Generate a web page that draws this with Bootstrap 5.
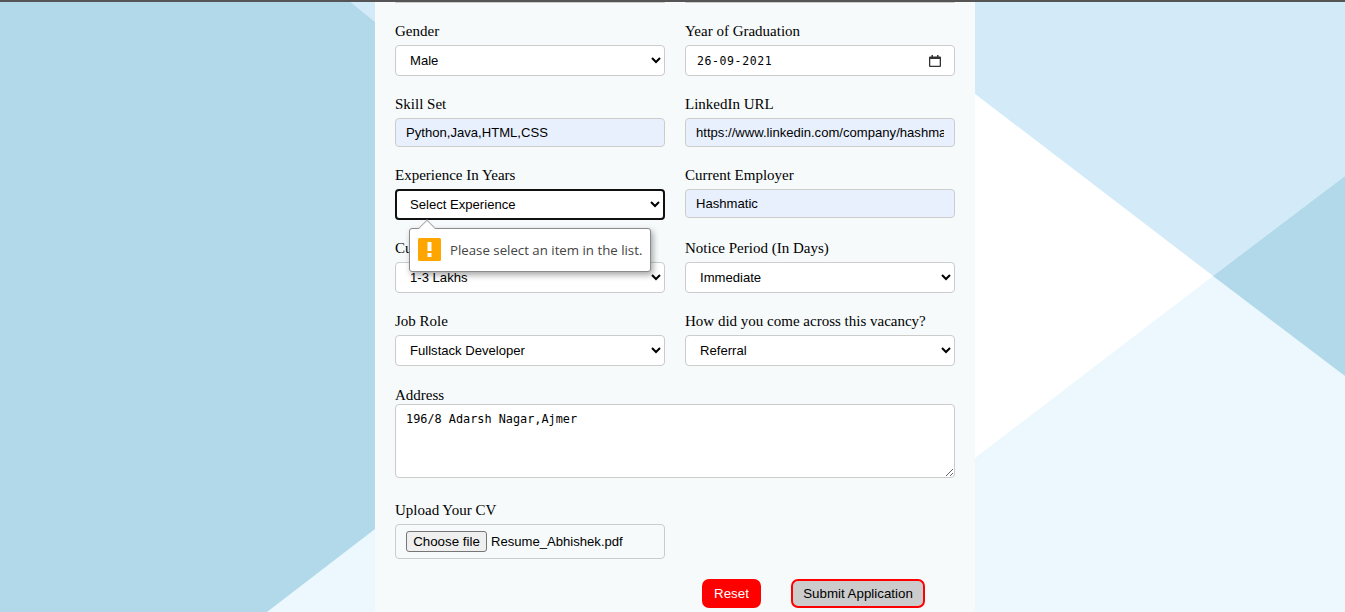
<!DOCTYPE html>
<html lang="en">
<head>
  <meta charset="UTF-8">
  <meta name="viewport" content="width=device-width, initial-scale=1.0">
  <title>Job Application</title>
  <link href="https://cdn.jsdelivr.net/npm/bootstrap@5.3.0/dist/css/bootstrap.min.css" rel="stylesheet">
  <style>
    html, body {
      height: 100%;
      overflow: hidden;
    }
    body {
      background-color: #ecf8fe;
      background-image: url("data:image/svg+xml,%3Csvg xmlns='http://www.w3.org/2000/svg' width='1345' height='612'%3E%3Cpolygon fill='%23d3ebf9' points='348,0 1345,0 1345,176 1213,276 975,94 375,22'/%3E%3Cpolygon fill='%23fff' points='975,94 1213,276 975,458'/%3E%3Cpolygon fill='%23b1d9ea' points='1345,176 1213,276 1345,376'/%3E%3Cpolygon fill='%23b1d9ea' points='0,0 348,0 375,22 375,529 267,612 0,612'/%3E%3C/svg%3E");
      background-repeat: no-repeat;
      border-top: 2px solid #555;
      font-family: "Liberation Serif", serif;
      color: #000;
    }
    .apply-panel {
      width: 600px;
      height: 610px;
      margin-left: 375px;
      padding: 0 20px;
      background: #f6fafb;
    }
    .apply-panel .row {
      --bs-gutter-x: 20px;
      margin-bottom: 16px;
    }
    .cut-field {
      height: 1px;
      border-bottom: 1px solid #ccc;
      border-radius: 0 0 4px 4px;
    }
    .fld-label {
      display: block;
      font-size: 15px;
      line-height: 24px;
      margin-bottom: 2px;
    }
    .fld-label.tight {
      line-height: 18px;
      margin: 20px 0 0;
    }
    .fld {
      font-family: "Liberation Sans", Arial, sans-serif;
      font-size: 13.1px;
      line-height: 17px;
      color: #000;
      border: 1px solid #ccc;
      border-radius: 4px;
      padding: 5px 10px;
      height: 29px;
    }
    select.fld {
      appearance: auto;
      -webkit-appearance: auto;
      height: 31px;
      background-color: #fff;
    }
    .fld.filled {
      background-color: #e8f0fe;
    }
    .fld.date-fld {
      height: 31px;
      padding-left: 11px;
      font-family: "DejaVu Sans Mono", monospace;
      font-size: 11.5px;
      letter-spacing: .6px;
      background: #fff url("data:image/svg+xml,%3Csvg xmlns='http://www.w3.org/2000/svg' width='12' height='12'%3E%3Cpath fill='%23333' d='M1 1.5h1.5V0h1.5v1.5h4V0h1.5v1.5H11a1 1 0 0 1 1 1V11a1 1 0 0 1-1 1H1a1 1 0 0 1-1-1V2.5a1 1 0 0 1 1-1zM1.300 4v6.700h9.400V4z'/%3E%3C/svg%3E") no-repeat right 13px center;
    }
    .fld.is-focus {
      border: 2px solid #101010;
      padding: 4px 9px;
      box-shadow: none;
    }
    textarea.fld {
      height: 74px;
      font-family: "DejaVu Sans Mono", monospace;
      font-size: 11.85px;
      line-height: 15px;
      padding: 7px 10px;
    }
    .file-fld {
      height: 35px;
      padding: 0 10px;
      background: transparent;
    }
    .file-btn {
      height: 21px;
      width: 81px;
      padding: 0;
      background: #efefef;
      border: 1px solid #767676;
      border-radius: 3px;
      font-family: "Liberation Sans", Arial, sans-serif;
      font-size: 13.33px;
      line-height: 19px;
      color: #000;
    }
    .act-row {
      padding-right: 30px;
      gap: 30px;
      margin-top: 20px;
    }
    .act-btn {
      height: 29px;
      padding: 0;
      font-family: "Liberation Sans", Arial, sans-serif;
      font-size: 13.33px;
      line-height: 25px;
      border-radius: 7px;
    }
    .act-reset {
      width: 59px;
      background: #f00;
      border: 2px solid #f00;
      color: #fff;
    }
    .act-submit {
      width: 134px;
      background: #ccc;
      border: 2px solid #f00;
      color: #000;
    }
    .tip-bubble {
      position: absolute;
      left: 24px;
      top: 65px;
      width: 242px;
      height: 44px;
      background: #fff;
      border: 1px solid #8a8a8a;
      border-radius: 3px;
      box-shadow: 2px 3px 6px rgba(0, 0, 0, .35);
      padding-left: 8px;
      gap: 9px;
      font-family: "Open Sans", sans-serif;
      font-size: 13.25px;
      white-space: nowrap;
      color: #444;
      z-index: 5;
    }
    .tip-bubble span {
      padding-top: 2px;
    }
    .tip-bubble::before {
      content: "";
      position: absolute;
      left: 11px;
      top: -7px;
      width: 12px;
      height: 12px;
      background: #fff;
      border-left: 1px solid #aaa;
      border-top: 1px solid #aaa;
      transform: rotate(45deg);
    }
    .tip-icon {
      width: 23px;
      height: 23px;
      flex: none;
      margin-top: -2px;
    }
  </style>
</head>
<body>
  <div class="apply-panel">
    <div class="row">
      <div class="col-6"><div class="cut-field"></div></div>
      <div class="col-6"><div class="cut-field"></div></div>
    </div>
    <div class="row">
      <div class="col-6">
        <label class="fld-label">Gender</label>
        <select class="form-control fld"><option>Male</option></select>
      </div>
      <div class="col-6">
        <label class="fld-label">Year of Graduation</label>
        <input type="text" class="form-control fld date-fld" value="26-09-2021">
      </div>
    </div>
    <div class="row">
      <div class="col-6">
        <label class="fld-label">Skill Set</label>
        <input type="text" class="form-control fld filled" value="Python,Java,HTML,CSS">
      </div>
      <div class="col-6">
        <label class="fld-label">LinkedIn URL</label>
        <input type="text" class="form-control fld filled" value="https://www.linkedin.com/company/hashmatic">
      </div>
    </div>
    <div class="row">
      <div class="col-6 position-relative">
        <label class="fld-label">Experience In Years</label>
        <select class="form-control fld is-focus"><option>Select Experience</option></select>
        <div class="tip-bubble d-flex align-items-center">
          <svg class="tip-icon" viewBox="0 0 23 23">
            <rect width="23" height="23" rx="1.500" fill="#ffa500"/>
            <rect x="9.500" y="4" width="4" height="9" fill="#fff"/>
            <rect x="9.500" y="15" width="4" height="4" fill="#fff"/>
          </svg>
          <span>Please select an item in the list.</span>
        </div>
      </div>
      <div class="col-6">
        <label class="fld-label">Current Employer</label>
        <input type="text" class="form-control fld filled" value="Hashmatic">
      </div>
    </div>
    <div class="row">
      <div class="col-6">
        <label class="fld-label">Current CTC</label>
        <select class="form-control fld"><option>1-3 Lakhs</option></select>
      </div>
      <div class="col-6">
        <label class="fld-label">Notice Period (In Days)</label>
        <select class="form-control fld"><option>Immediate</option></select>
      </div>
    </div>
    <div class="row">
      <div class="col-6">
        <label class="fld-label">Job Role</label>
        <select class="form-control fld"><option>Fullstack Developer</option></select>
      </div>
      <div class="col-6">
        <label class="fld-label">How did you come across this vacancy?</label>
        <select class="form-control fld"><option>Referral</option></select>
      </div>
    </div>
    <label class="fld-label tight">Address</label>
    <textarea class="form-control fld">196/8 Adarsh Nagar,Ajmer</textarea>
    <div class="row mt-0">
      <div class="col-6">
        <label class="fld-label mt-3 pt-1">Upload Your CV</label>
        <div class="form-control fld file-fld d-flex align-items-center gap-1">
          <button type="button" class="file-btn">Choose file</button>
          <span>Resume_Abhishek.pdf</span>
        </div>
      </div>
    </div>
    <div class="d-flex justify-content-end act-row">
      <button type="button" class="btn act-btn act-reset">Reset</button>
      <button type="button" class="btn act-btn act-submit">Submit Application</button>
    </div>
  </div>
  <script src="https://cdn.jsdelivr.net/npm/bootstrap@5.3.0/dist/js/bootstrap.bundle.min.js"></script>
</body>
</html>
